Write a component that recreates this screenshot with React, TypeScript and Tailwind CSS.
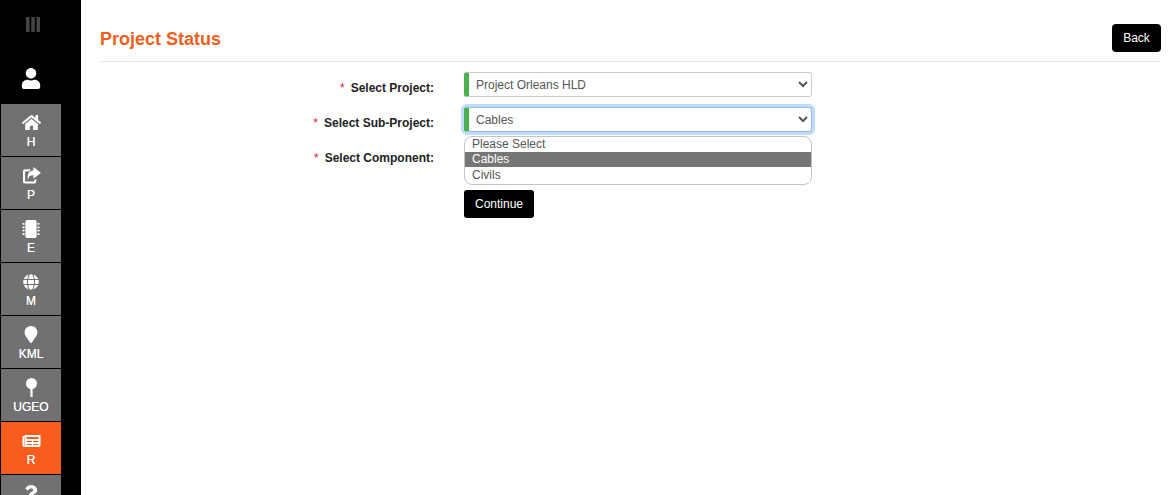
import type { ReactNode } from "react";
import { FaGlobe, FaHome, FaMapMarker, FaMicrochip, FaNewspaper, FaQuestion, FaUser } from "react-icons/fa";

type NavItem = {
  label: string;
  icon: ReactNode;
  active?: boolean;
};

function ShareIcon() {
  return (
    <svg viewBox="0 0 20 18" className="h-[17px] w-[19px]" fill="currentColor">
      <path d="M9 2.5H3A2 2 0 0 0 1 4.500V15.500A2 2 0 0 0 3 17.500H13A2 2 0 0 0 15 15.500V12.500L12.800 14V15.300H3.200V4.700H7.500Z" />
      <path d="M12 0L20 6.200L12 12.400V8.700C8.500 8.700 6.800 10 6.500 14C4.800 9.500 6.500 4 12 3.700Z" />
    </svg>
  );
}

function PinIcon() {
  return (
    <svg viewBox="0 0 11 19" className="h-[19px] w-[11px]" fill="currentColor">
      <circle cx="5.500" cy="5.500" r="5.500" />
      <rect x="4.400" y="10" width="2.200" height="9" />
    </svg>
  );
}

const navItems: NavItem[] = [
  { label: "H", icon: <FaHome className="h-[19px] w-[19px]" /> },
  { label: "P", icon: <ShareIcon /> },
  { label: "E", icon: <FaMicrochip className="h-[18px] w-[18px]" /> },
  { label: "M", icon: <FaGlobe className="h-[16px] w-[16px]" /> },
  { label: "KML", icon: <FaMapMarker className="h-[17px] w-[14px]" /> },
  { label: "UGEO", icon: <PinIcon /> },
  { label: "R", icon: <FaNewspaper className="h-[16px] w-[19px]" />, active: true },
  { label: "?", icon: <FaQuestion className="h-[17px] w-[14px]" /> },
];

function Sidebar() {
  return (
    <aside className="h-[495px] w-[81px] shrink-0 overflow-hidden bg-black">
      <div className="flex h-[50px] w-[66px] items-center justify-center pb-[1px]">
        <svg viewBox="0 0 14 15" className="h-[15px] w-[14px]" fill="#454545">
          <rect x="0" width="3.500" height="15" />
          <rect x="5.300" width="3.500" height="15" />
          <rect x="10.500" width="3.500" height="15" />
        </svg>
      </div>
      <div className="flex h-[54px] w-[62px] items-start justify-center pt-[18px] text-white">
        <FaUser className="h-[21px] w-[20px]" />
      </div>
      <nav className="flex w-[61px] flex-col gap-px pl-px">
        {navItems.map((item) => (
          <a
            key={item.label}
            className={`flex h-[52px] shrink-0 flex-col items-center pt-[9px] text-white ${
              item.active ? "bg-[#f95d1e]" : "bg-[#717171]"
            }`}
          >
            <span className="flex h-[19px] items-center">{item.icon}</span>
            <span className="mt-[3px] text-[12px] leading-[15px] [text-shadow:0_0_0.6px_#fff]">
              {item.label === "?" ? "" : item.label}
            </span>
          </a>
        ))}
      </nav>
    </aside>
  );
}

function FieldLabel({ children }: { children: string }) {
  return (
    <label className="flex h-[35px] items-center justify-end pr-[30px] pb-[4px] text-[12px] font-bold text-[#222]">
      <span className="mr-[6px] font-normal text-[#e0202c]">*</span>
      {children}
    </label>
  );
}

export default function App() {
  return (
    <div className="flex h-[495px] w-[1175px] overflow-hidden bg-white font-['Liberation_Sans',Arial,sans-serif]">
      <Sidebar />
      <main className="min-w-0 flex-1 px-[19px] pr-[14px]">
        <header className="flex h-[62px] items-end justify-between border-b border-[#e9e9e9] pb-[9px]">
          <h1 className="mb-[2px] text-[18px] leading-[22px] font-bold text-[#ef5f19]">Project Status</h1>
          <button className="h-[28px] w-[49px] rounded-[4px] bg-black text-[12px] text-white">Back</button>
        </header>

        <div className="mt-[10px] grid grid-cols-[364px_348px]">
          <div className="flex flex-col">
            <FieldLabel>Select Project:</FieldLabel>
            <FieldLabel>Select Sub-Project:</FieldLabel>
            <FieldLabel>Select Component:</FieldLabel>
          </div>
          <div className="flex flex-col">
            <select
              defaultValue="Project Orleans HLD"
              className="h-[25px] w-[348px] rounded-[3px] border border-l-[5px] border-[#cccccc] border-l-[#4caf50] bg-white pl-[3px] text-[12px] text-[#555]"
            >
              <option>Project Orleans HLD</option>
            </select>
            <select
              defaultValue="Cables"
              className="mt-[10px] h-[25px] w-[348px] rounded-[3px] border border-l-[5px] border-[#8fbbe8] border-l-[#4caf50] bg-white pl-[3px] text-[12px] text-[#555] shadow-[0_0_0_3px_#bfdeff]"
            >
              <option>Please Select</option>
              <option>Cables</option>
              <option>Civils</option>
            </select>
            <ul className="mt-[4px] w-[348px] overflow-hidden rounded-[8px] border border-[#c4c4c4] bg-white text-[12px] leading-[15px] text-[#555]">
              <li className="h-[15px] pl-[7px]">Please Select</li>
              <li className="h-[15px] bg-[#767676] pl-[7px] text-white">Cables</li>
              <li className="h-[17px] pt-[1px] pl-[7px]">Civils</li>
            </ul>
            <button className="mt-[5px] h-[28px] w-[70px] rounded-[3px] bg-black text-[12px] text-white">Continue</button>
          </div>
        </div>
      </main>
    </div>
  );
}
